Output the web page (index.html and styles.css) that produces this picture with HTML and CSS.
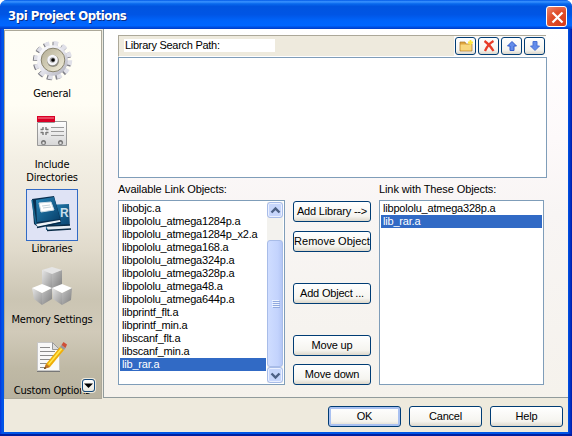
FILE: index.html
```html
<!DOCTYPE html>
<html lang="en">
<head>
<meta charset="utf-8">
<title>3pi Project Options</title>
<link rel="stylesheet" href="styles.css">
</head>
<body>
<div class="window">
  <header class="titlebar">
    <h1>3pi Project Options</h1>
    <button class="close" aria-label="Close"><svg width="21" height="21" viewBox="0 0 21 21"><path d="M5.5 5.5l10 10M15.5 5.5l-10 10" stroke="#fff" stroke-width="2.2"/></svg></button>
  </header>
  <div class="body">
    <nav class="sidebar">
      <div class="item">
        <div class="pic"><svg width="42" height="42" viewBox="0 0 42 42">
          <defs><linearGradient id="metal" x1="0" y1="0" x2="1" y2="1"><stop offset="0" stop-color="#fff"/><stop offset=".5" stop-color="#e6e6ee"/><stop offset="1" stop-color="#a9a9b4"/></linearGradient>
          <linearGradient id="dish" x1="0" y1="0" x2="1" y2="1"><stop offset="0" stop-color="#b3ad94"/><stop offset="1" stop-color="#f4f0dd"/></linearGradient></defs>
          <g fill="none" stroke-width="5">
            <circle cx="21" cy="22" r="16.700" stroke="#808088" stroke-dasharray="5 3.744"/>
            <circle cx="22" cy="21.300" r="16.700" stroke="#e0e0e8" stroke-dasharray="4.600 4.144"/>
          </g>
          <circle cx="21.500" cy="21.500" r="15.300" fill="url(#metal)"/>
          <circle cx="22" cy="21" r="11.800" fill="url(#dish)" stroke="#88836e"/>
          <circle cx="22" cy="22" r="6" fill="#8f8d82"/><circle cx="21.500" cy="21" r="5.300" fill="#f6f6fa"/><circle cx="21.500" cy="21" r="2.800" fill="#aaa"/><circle cx="22" cy="21" r="1.800" fill="#000"/>
        </svg></div>
        <span>General</span>
      </div>
      <div class="item">
        <div class="pic"><svg width="30" height="30" viewBox="0 0 30 30">
          <defs><linearGradient id="card" x1="0" y1="0" x2="0" y2="1"><stop offset="0" stop-color="#fff"/><stop offset="1" stop-color="#d6d6d6"/></linearGradient></defs>
          <path d="M.5 6.500h17v-1h12v24H.5z" fill="url(#card)" stroke="#999"/>
          <path d="M0 0h18v6H0z" fill="#d90026"/><path d="M1 1h16v2H1z" fill="#e94760"/>
          <path d="M3.500 13.500h2.500M9 13.500h2.500M3.500 16.500h2.500M9 16.500h2.500M6 11v3M9 11v3M6 16v3M9 16v3" stroke="#777" stroke-width="1.400"/>
          <path d="M14 11.500h13M14 15.500h13M14 19.500h13" stroke="#999"/>
          <circle cx="6.500" cy="26.500" r="2.500" fill="#777"/><circle cx="6.500" cy="27" r="1.200" fill="#ddd"/>
          <circle cx="23.500" cy="26.500" r="2.500" fill="#777"/><circle cx="23.500" cy="27" r="1.200" fill="#ddd"/>
        </svg></div>
        <span>Include<br>Directories</span>
      </div>
      <div class="item selected">
        <div class="pic"><svg width="50" height="50" viewBox="0 0 50 50">
          <defs><linearGradient id="book" x1="0" y1="0" x2="1" y2="1"><stop offset="0" stop-color="#2785b7"/><stop offset="1" stop-color="#073e69"/></linearGradient></defs>
          <path d="M18 15l24-1 1 25-24 1z" fill="url(#book)"/>
          <path d="M19 36l24-1 1 4-23 1z" fill="#e6edf3"/><path d="M19 36l24-1M20 40.500l24-1.500" stroke="#092c47" stroke-width="1.500"/>
          <text class="mark" x="33" y="27">R</text>
          <path d="M5 9L27 6l7 25-23 6-4-3z" fill="#092f50"/>
          <path d="M9 10l18-3 6 22-23 3z" fill="url(#book)"/>
          <path d="M9 34l24-4 .5 2L11 37z" fill="#eef4f8"/><path d="M10 37.500l24-5" stroke="#062b49" stroke-width="1.500"/>
          <path d="M12 13l12-1 3 8-13 2z" fill="#fff" stroke="#ccdbe5"/><path d="M15 16l8-1M16 18l8-1" stroke="#c5d3da"/>
          <path d="M5 10l4 24" stroke="#176992" stroke-width="1.500"/>
        </svg></div>
        <span>Libraries</span>
      </div>
      <div class="item">
        <div class="pic"><svg width="42" height="40" viewBox="0 0 42 40">
          <defs><linearGradient id="cl" x1="0" y1="0" x2="1" y2="1"><stop offset="0" stop-color="#e6e6e6"/><stop offset="1" stop-color="#959595"/></linearGradient>
          <linearGradient id="cr" x1="0" y1="0" x2="1" y2="1"><stop offset="0" stop-color="#c4c4c4"/><stop offset="1" stop-color="#7e7e7e"/></linearGradient></defs>
          <path d="M11 4l10 3v16l-10-4z" fill="url(#cl)"/><path d="M21 7l10-3v15l-10 4z" fill="url(#cr)"/><path d="M11 4l10-3 10 3-10 4z" fill="#e5e5e5"/>
          <path d="M1 22l10 5v12L3 33z" fill="url(#cl)"/><path d="M11 27l10-5v11l-10 6z" fill="url(#cr)"/><path d="M1 22l10-4 10 4-10 5z" fill="#fff"/>
          <path d="M21 22l10 5v12l-9-6z" fill="url(#cl)"/><path d="M31 27l10-5-1 12-9 5z" fill="url(#cr)"/><path d="M21 22l10-4 10 4-10 5z" fill="#fff"/>
        </svg></div>
        <span>Memory Settings</span>
      </div>
      <div class="item">
        <div class="pic"><svg width="30" height="32" viewBox="0 0 30 32">
          <path d="M.5 1.500h15l7 7v21H.5z" fill="#f9f9f9" stroke="#c7c7c7"/><path d="M0 30.500h23" stroke="#777"/><path d="M15.500 1.500v7h7z" fill="#ddd" stroke="#999"/>
          <path d="M3 6.500h10M3 10.500h15M3 14.500h15M3 18.500h11M3 22.500h8M3 26.500h6" stroke="#8c8c8c"/>
          <path d="M9 23l14-17 4 3-14 17-6 2z" fill="#efad09"/><path d="M11 23L24 7l1.500 1L12 24z" fill="#ffe84d"/>
          <path d="M9 23l4 3-6 2z" fill="#bc742f"/><path d="M7 28l1-2 1 1.200z" fill="#222"/>
          <path d="M23 6l1.500-2 4 3L27 9z" fill="#999"/><path d="M24.500 4l2-3 3.500 2.500L28.500 7z" fill="#ce4f38"/>
        </svg></div>
        <span>Custom Options</span>
      </div>
      <button class="more" aria-label="More"><svg width="11" height="11" viewBox="0 0 11 11"><path d="M1 3.500h9L5.500 8z" fill="#000"/></svg></button>
    </nav>
    <main class="page">
      <div class="pathbar">
        <div class="caption"><span>Library Search Path:</span></div>
        <div class="tools">
          <button><svg width="16" height="14" viewBox="0 0 16 14"><path d="M2 12V3h5l1 2h6v7z" fill="#e0a63e" stroke="#a97725" stroke-width=".7"/><path d="M2.500 5.500h11v6h-11z" fill="#f8d77d"/><path d="M10 3.500h5M12.500 1v5" stroke="#ffe83c" stroke-width="1.800"/></svg></button>
          <button><svg width="16" height="14" viewBox="0 0 16 14"><path d="M3.500 2c3 2 6 5 9 10M12.500 2C9 4 6 7 4 12" fill="none" stroke="#e73b28" stroke-width="2.300"/></svg></button>
          <button><svg width="16" height="14" viewBox="0 0 16 14"><path d="M8 2.500l4.500 4.500H10v4.500H6V7H3.500z" fill="#638cea" stroke="#315acb"/></svg></button>
          <button><svg width="16" height="14" viewBox="0 0 16 14"><path d="M8 11.500L3.500 7H6V2.500h4V7h2.500z" fill="#638cea" stroke="#4b73d5"/></svg></button>
        </div>
      </div>
      <div class="box paths"></div>
      <div class="columns">
        <section class="available">
          <h2>Available Link Objects:</h2>
          <div class="box scrolling">
            <ul>
              <li>libobjc.a</li><li>libpololu_atmega1284p.a</li><li>libpololu_atmega1284p_x2.a</li><li>libpololu_atmega168.a</li><li>libpololu_atmega324p.a</li><li>libpololu_atmega328p.a</li><li>libpololu_atmega48.a</li><li>libpololu_atmega644p.a</li><li>libprintf_flt.a</li><li>libprintf_min.a</li><li>libscanf_flt.a</li><li>libscanf_min.a</li><li class="on">lib_rar.a</li>
            </ul>
            <div class="scrollbar">
              <div class="arrow"><svg width="15" height="15" viewBox="0 0 15 15"><path d="M3.500 9.500l4-4 4 4" fill="none" stroke="#4d6185" stroke-width="2.400"/></svg></div>
              <div class="track"><div class="thumb"><i></i><i></i><i></i><i></i></div></div>
              <div class="arrow"><svg width="15" height="15" viewBox="0 0 15 15"><path d="M3.500 5.500l4 4 4-4" fill="none" stroke="#4d6185" stroke-width="2.400"/></svg></div>
            </div>
          </div>
        </section>
        <div class="actions">
          <button class="btn">Add Library --&gt;</button>
          <button class="btn b-rem">Remove Object</button>
          <button class="btn b-obj">Add Object ...</button>
          <button class="btn b-up">Move up</button>
          <button class="btn">Move down</button>
        </div>
        <section class="linked">
          <h2>Link with These Objects:</h2>
          <div class="box"><ul><li>libpololu_atmega328p.a</li><li class="on">lib_rar.a</li></ul></div>
        </section>
      </div>
    </main>
  </div>
  <footer>
    <button class="btn default">OK</button>
    <button class="btn">Cancel</button>
    <button class="btn">Help</button>
  </footer>
</div>
</body>
</html>
```

FILE: styles.css
```css
* { box-sizing: border-box; }
body { margin: 0; background: #fff; color: #000; font: 11px/13px "Liberation Sans", Arial, sans-serif; letter-spacing: -0.2px; overflow: hidden; }
h1, h2, ul { margin: 0; padding: 0; font: inherit; list-style: none; }
button { margin: 0; padding: 0; font: inherit; letter-spacing: inherit; color: inherit; }
svg { display: block; }
.window { width: 572px; height: 436px; display: flex; flex-direction: column; padding: 0 4px 4px; border-radius: 7px 7px 0 0; background: linear-gradient(90deg, #0831d9, #0054e8 2px, #0055e6 4px, #0055e6 568px, #0019aa); box-shadow: inset 0 -2px #001ea0; overflow: hidden; }
.titlebar { height: 29px; flex: none; display: flex; align-items: center; justify-content: space-between; margin: 0 -4px; padding: 3px 5px 0 8px; background: linear-gradient(#0058e6 0, #3a93ff 6%, #0869ed 13%, #0054df 22%, #0055e5 50%, #0064fb 72%, #0066ff 88%, #0048d8 96%, #003dc8); }
.titlebar h1 { color: #fff; font: bold 13px/16px "DejaVu Sans Condensed", "DejaVu Sans", sans-serif; letter-spacing: -0.44px; text-shadow: 1px 1px #0a2d84; white-space: nowrap; }
.close { width: 21px; height: 21px; border: 1px solid #fff; border-radius: 3px; background: radial-gradient(circle at 80% 90%, #d93c1a, #df4e2b 55%, #ed8a72); display: grid; place-items: center; }
.body { height: 369px; flex: none; display: flex; background: #eeeadd; }
.sidebar { position: relative; width: 98px; height: 369px; margin-top: 1px; padding: 3px 0 0; flex: none; overflow: hidden; border: 1px solid #aca899; background: linear-gradient(#fffef6 0, #fffdf4 20%, #f3efe4 35%, #ece7db 48%, #e0dacb 60%, #cbc5b3 73%, #d1cab9 82%, #bfb9a5 92%, #b8b29f); font: 11px/13px "DejaVu Sans Condensed", "DejaVu Sans", sans-serif; letter-spacing: -0.2px; text-align: center; }
.item { display: flex; flex-direction: column; align-items: center; gap: 1px; margin-bottom: 5px; margin-right: 2px; white-space: nowrap; }
.pic { width: 52px; height: 52px; display: grid; place-items: center; }
.selected .pic { border: 1px solid #316ac5; background: #dfe3f5; }
.mark { font: bold 12px "Liberation Sans", sans-serif; fill: #c9dfeb; }
.more { position: absolute; right: 6px; bottom: 6px; width: 13px; height: 13px; border: 1px solid #164a7d; border-radius: 3px; background: linear-gradient(#fff, #eae8df); box-shadow: 0 0 0 1px #eeeadd; display: grid; place-items: center; }
.page { flex: 1; min-width: 0; height: 369px; margin-left: 1px; padding: 6px 21px 0 14px; border-left: 1px solid #919b9c; border-bottom: 1px solid #919b9c; background: linear-gradient(#fff, #fdf9fa 30%, #f8f5f4 50%, #f5f2ec); }
.pathbar { display: flex; height: 22px; width: 428px; border-top: 1px solid #aca899; border-left: 1px solid #aca899; background: #eeeadd; border-bottom: 1px solid #fff; justify-content: space-between; }
.caption { width: 151px; height: 13px; margin: 3px 0 0 5px; padding-left: 1px; background: #fff; white-space: nowrap; letter-spacing: -0.28px; }
.tools { display: flex; gap: 2px; padding: 1px 1px 0; background: #fbf9f8; }
.tools button { width: 21px; height: 18px; }
.tools button, .btn { border: 1px solid #003c74; border-radius: 3px; background: linear-gradient(#fff, #f5f4ef 75%, #dcd7cb); display: grid; place-items: center; }
.box { border: 1px solid #7f9db9; background: #fff; }
.paths { width: 429px; height: 121px; }
.columns { display: flex; gap: 8px; width: 426px; padding-top: 5px; }
.columns h2 { height: 17px; white-space: nowrap; letter-spacing: -0.1px; }
.available { width: 167px; }
.linked { width: 165px; }
.columns .box { height: 185px; padding: 1px; }
.columns li { height: 13px; padding-left: 2px; white-space: nowrap; }
.on { background: #316ac5; color: #fff; }
.scrolling { display: flex; }
.scrolling ul { width: 146px; margin-right: 1px; }
.scrollbar { width: 16px; display: flex; flex-direction: column; justify-content: space-between; background: #f3f2ee; }
.arrow { width: 16px; height: 16px; border: 1px solid #a8bce8; border-radius: 3px; background: #c7d6fb; box-shadow: inset 0 0 0 1px #eaf0ff; }
.track { flex: 1; display: flex; align-items: flex-end; }
.thumb { width: 16px; height: 127px; border: 1px solid #a8bce8; border-radius: 3px; background: linear-gradient(90deg, #cfddff, #c3d3fd 70%, #b5c7f5); display: flex; flex-direction: column; align-items: center; justify-content: center; gap: 1px; }
.thumb i { width: 7px; height: 1px; background: #edf3ff; box-shadow: 1px 1px #91a9df; }
.actions { width: 78px; padding-top: 18px; }
.actions .btn { width: 78px; margin-bottom: 9px; overflow: hidden; white-space: nowrap; }
.btn { height: 21px; }
.actions .b-rem { margin-bottom: 31px; letter-spacing: 0; }
.actions .b-obj { margin-bottom: 31px; }
.actions .b-up { margin-bottom: 8px; }
footer { flex: 1; display: flex; justify-content: flex-end; gap: 8px; padding: 8px 5px 0 0; background: #eeeadd; }
footer .btn { width: 73px; }
.default { box-shadow: inset 0 0 0 2px #a9c1f1; }
```
